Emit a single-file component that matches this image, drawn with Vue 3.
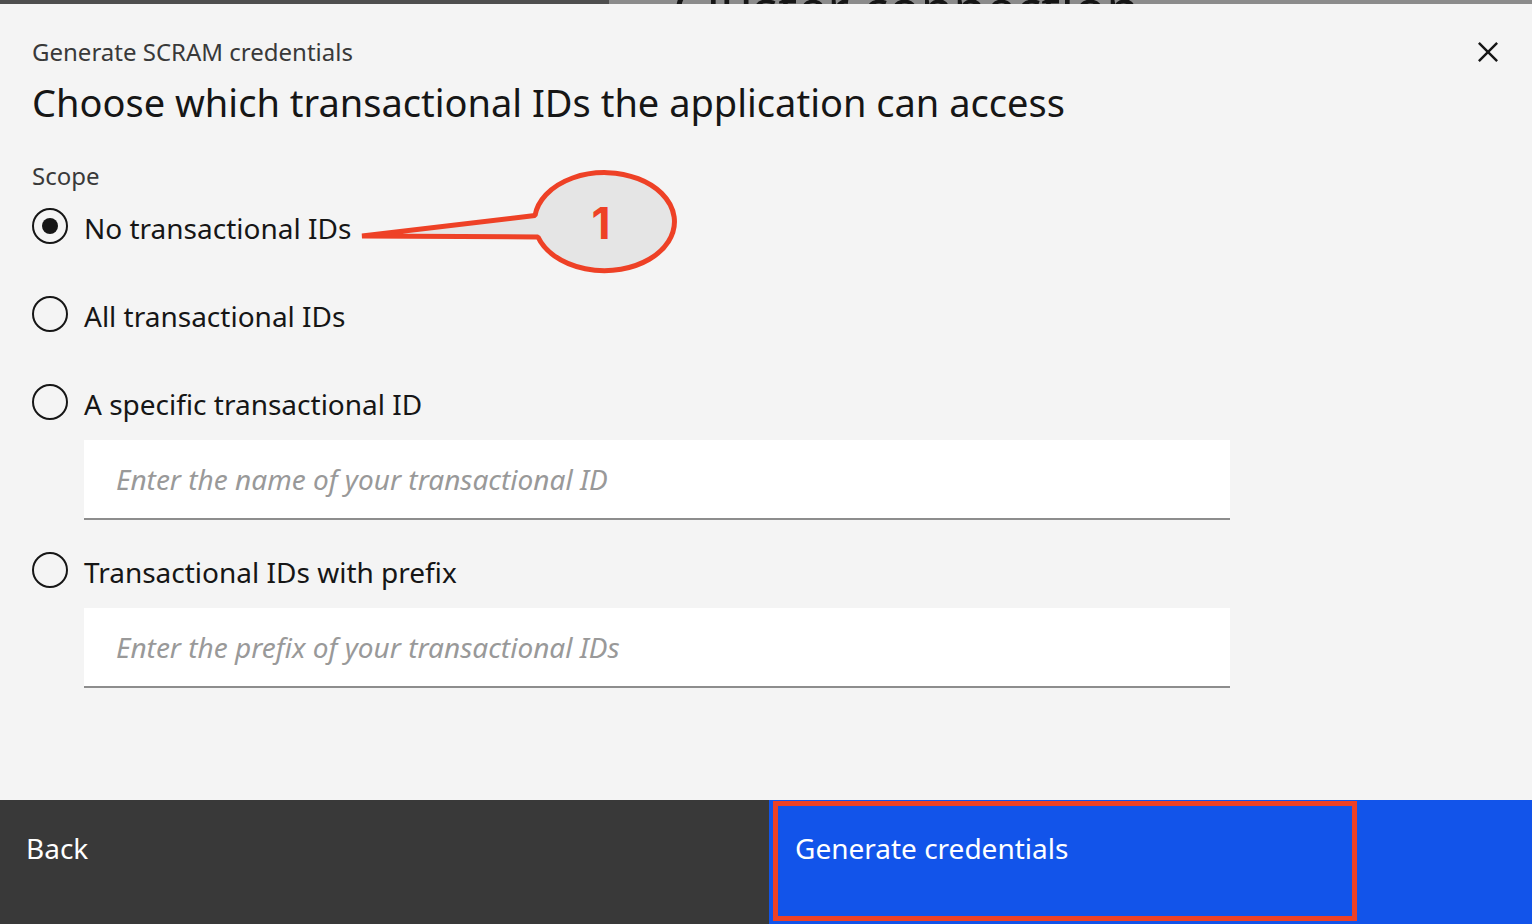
<script setup>
import { ref } from 'vue'

const scope = ref('none')
const names = ref({ specific: '', prefix: '' })
const options = [
  { value: 'none', label: 'No transactional IDs', callout: true },
  { value: 'all', label: 'All transactional IDs' },
  { value: 'specific', label: 'A specific transactional ID', placeholder: 'Enter the name of your transactional ID' },
  { value: 'prefix', label: 'Transactional IDs with prefix', placeholder: 'Enter the prefix of your transactional IDs' },
]
</script>

<template>
  <div class="page">
    <div class="backdrop">
      <div class="backdrop-side"></div>
      <div class="backdrop-main">
        <span class="backdrop-title">Cluster connection</span>
      </div>
    </div>

    <main class="dialog" role="dialog" aria-labelledby="dialog-title">
      <header class="header">
        <div>
          <p class="eyebrow">Generate SCRAM credentials</p>
          <h1 id="dialog-title" class="title">Choose which transactional IDs the application can access</h1>
        </div>
        <button class="close" type="button" aria-label="Close">
          <svg viewBox="0 0 32 32" width="40" height="40" aria-hidden="true">
            <path d="M24 9.4L22.6 8 16 14.6 9.4 8 8 9.4l6.6 6.6L8 22.6 9.4 24l6.6-6.6 6.6 6.6 1.4-1.4-6.6-6.6L24 9.4z" fill="#161616" />
          </svg>
        </button>
      </header>

      <fieldset class="scope">
        <legend class="legend">Scope</legend>
        <div class="options">
          <div v-for="o in options" :key="o.value" class="option">
            <div class="choice">
              <input :id="`scope-${o.value}`" v-model="scope" class="radio" type="radio" name="scope" :value="o.value">
              <label class="label" :for="`scope-${o.value}`">{{ o.label }}</label>
              <svg v-if="o.callout" class="callout" viewBox="0 0 328 112" width="328" height="112" aria-hidden="true">
                <path d="M9 71 L182 50.5 A70 49 0 1 1 185 72 Z" fill="#e5e5e5" stroke="#ee4126" stroke-width="5" stroke-linejoin="bevel" />
                <text x="248" y="74" class="callout-number">1</text>
              </svg>
            </div>
            <input
              v-if="o.placeholder"
              v-model="names[o.value]"
              class="field"
              type="text"
              :placeholder="o.placeholder"
              :aria-label="o.label"
            >
          </div>
        </div>
      </fieldset>
    </main>

    <footer class="actions">
      <button class="action back" type="button">Back</button>
      <button class="action generate" type="button">
        Generate credentials
        <span class="highlight"></span>
      </button>
    </footer>
  </div>
</template>

<style>
body {
  background: #f4f4f4;
}
</style>

<style scoped>
.page {
  display: flex;
  flex-direction: column;
  min-height: 100vh;
  background: #f4f4f4;
  color: #161616;
  font-family: "Noto Sans", "Open Sans", sans-serif;
}

.backdrop {
  display: grid;
  grid-template-columns: 609fr 923fr;
  height: 4px;
  overflow: hidden;
}

.backdrop-side {
  background: #4f4f4f;
}

.backdrop-main {
  padding-left: 64px;
  background: #8b8b8b;
}

.backdrop-title {
  display: block;
  margin-top: -22px;
  font-size: 53px;
  line-height: 60px;
  white-space: nowrap;
}

.dialog {
  flex: 1;
  padding: 28px 24px 112px 32px;
}

.header {
  display: flex;
  align-items: flex-start;
  justify-content: space-between;
}

.eyebrow {
  margin: 0;
  color: #393939;
  font-size: 24px;
  line-height: 40px;
}

.title {
  margin: 0;
  font-size: 38px;
  font-weight: 400;
  line-height: 60px;
}

.close {
  display: flex;
  padding: 0;
  border: 0;
  background: none;
}

.scope {
  max-width: 1198px;
  margin: 24px 0 0;
  padding: 0;
  border: 0;
}

.legend {
  padding: 0;
  color: #393939;
  font-size: 24px;
  line-height: 40px;
}

.options {
  display: grid;
  gap: 28px;
  padding-top: 8px;
}

.choice {
  position: relative;
  display: flex;
  gap: 16px;
  height: 60px;
}

.radio {
  display: grid;
  place-content: center;
  width: 36px;
  height: 36px;
  margin: 4px 0 0;
  border: 2px solid #161616;
  border-radius: 50%;
  appearance: none;
}

.radio:checked::before {
  content: "";
  width: 16px;
  height: 16px;
  border-radius: 50%;
  background: #161616;
}

.label {
  font-size: 28px;
  line-height: 48px;
}

.callout {
  position: absolute;
  top: -39px;
  left: 321px;
}

.callout-number {
  fill: #ee4126;
  font-family: Inter, "Liberation Sans", sans-serif;
  font-size: 44px;
  font-weight: 700;
  text-anchor: middle;
}

.field {
  display: block;
  box-sizing: border-box;
  width: calc(100% - 52px);
  height: 80px;
  margin: 0 0 0 52px;
  padding: 0 32px;
  border: 0;
  border-bottom: 2px solid #8d8d8d;
  border-radius: 0;
  background: #ffffff;
  color: #161616;
  font-family: inherit;
  font-size: 28px;
}

.field::placeholder {
  color: #999999;
  font-style: italic;
  opacity: 1;
}

.actions {
  display: grid;
  grid-template-columns: 769fr 763fr;
}

.action {
  position: relative;
  height: 124px;
  padding: 0 26px 28px;
  border: 0;
  color: #ffffff;
  font-family: inherit;
  font-size: 28px;
  text-align: left;
}

.back {
  background: #393939;
}

.generate {
  background: #1254ea;
}

.highlight {
  position: absolute;
  inset: 1px 175px 3px 4px;
  border: 5px solid #ee4126;
}
</style>
